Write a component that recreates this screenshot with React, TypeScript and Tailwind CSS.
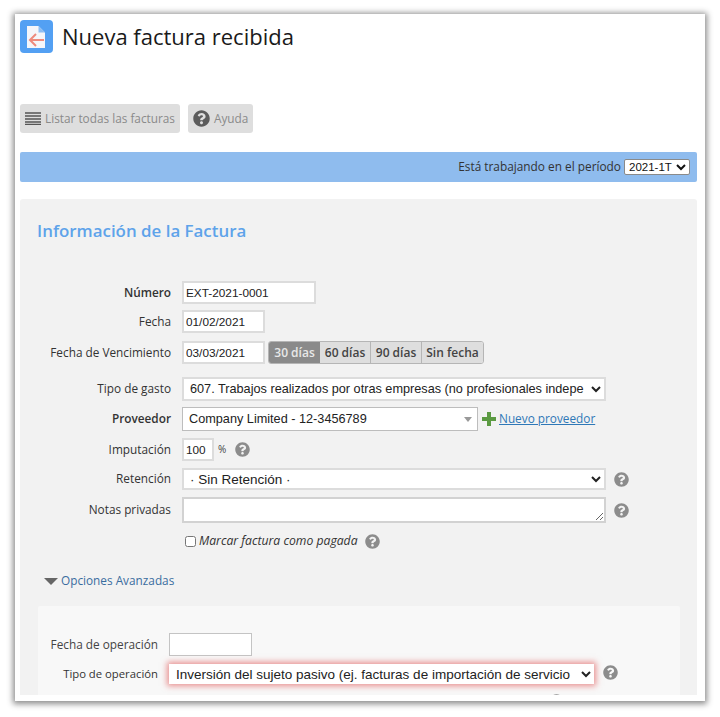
import { FaQuestionCircle } from "react-icons/fa";

const sans = "font-['Open_Sans',sans-serif]";
const arial = "font-['Liberation_Sans',Arial,sans-serif]";

function Help({ className = "" }: { className?: string }) {
  return <FaQuestionCircle className={`w-[15px] h-[15px] text-[#8c8c8c] shrink-0 ${className}`} />;
}

function Logo() {
  return (
    <svg width="33" height="33" viewBox="0 0 33 33" className="shrink-0">
      <rect width="33" height="33" rx="4" fill="#53a0f3" />
      <path d="M7 6h11.5L25 12.5V28H7z" fill="#f5f6fa" />
      <path d="M18.5 6L25 12.5h-6.5z" fill="#8dbdf2" />
      <path d="M24 20H10M16 14l-6 6 6 6" fill="none" stroke="#ee8a7c" strokeWidth="2" />
    </svg>
  );
}

function ListIcon() {
  return (
    <svg width="16" height="13" viewBox="0 0 16 13" className="shrink-0">
      <path d="M0 1h16M0 4h16M0 7h16M0 10h16M0 12.5h16" stroke="#555" strokeWidth="1.3" />
    </svg>
  );
}

function PlusIcon() {
  return (
    <svg width="14" height="14" viewBox="0 0 14 14" className="ml-[4px] shrink-0">
      <path d="M7 0v14M0 7h14" stroke="#5b9a42" strokeWidth="4" />
    </svg>
  );
}

function Row({
  label,
  bold,
  className = "",
  children,
}: {
  label: string;
  bold?: boolean;
  className?: string;
  children: React.ReactNode;
}) {
  return (
    <div className={`flex items-center ${className}`}>
      <label
        className={`w-[151px] text-right text-[11.8px] text-[#333] shrink-0 ${bold ? "font-semibold" : ""}`}
      >
        {label}
      </label>
      <div className="ml-[11px] flex items-center">{children}</div>
    </div>
  );
}

const field =
  "h-[23px] bg-white border-2 border-[#dcdcdc] px-[2px] text-[11.8px] text-[#222] outline-none " + arial;
const selectField =
  "w-[424px] bg-white border-2 border-[#dcdcdc] text-[12.7px] text-[#222] outline-none pl-[2px] " + arial;

export default function App() {
  return (
    <div className={`w-[720px] h-[717px] bg-white pt-[14px] pl-[15px] overflow-hidden ${sans}`}>
      <div className="w-[690px] h-[687px] bg-white pb-[6px] shadow-[0_1px_6px_2px_rgba(0,0,0,0.45)]">
        <div className="h-[681px] overflow-hidden pl-[5px] pr-[8px] pt-[6px]">
          <div className="flex items-center h-[33px]">
            <Logo />
            <h1 className="ml-[9px] -mt-[2px] text-[22px] leading-[32px] text-[#1a1a1a]">Nueva factura recibida</h1>
          </div>

          <div className="flex gap-[8px] mt-[51px]">
            <div className="h-[29px] w-[160px] bg-[#dedede] rounded-[3px] flex items-center pl-[5px] gap-[4px]">
              <ListIcon />
              <span className="text-[11.8px] text-[#8a8a8a]">Listar todas las facturas</span>
            </div>
            <div className="h-[29px] w-[65px] bg-[#dedede] rounded-[3px] flex items-center pl-[5px] gap-[4px]">
              <FaQuestionCircle className="w-[17px] h-[17px] text-[#5c5c5c]" />
              <span className="text-[11.8px] text-[#8a8a8a]">Ayuda</span>
            </div>
          </div>

          <div className="mt-[19px] h-[30px] bg-[#8fbcee] rounded-[2px] flex items-center justify-end pr-[7px]">
            <span className="text-[11.85px] text-[#333]">Está trabajando en el período</span>
            <select
              defaultValue="2021-1T"
              className={`ml-[3px] h-[16px] w-[66px] bg-white border border-[#8a8a8a] rounded-[2px] text-[11.5px] text-[#111] pl-0 ${arial}`}
            >
              <option>2021-1T</option>
            </select>
          </div>

          <div className="mt-[17px] h-[500px] bg-[#f2f2f2] rounded-t-[3px] overflow-hidden">
            <h2 className="pl-[17px] pt-[20px] text-[16.9px] leading-[24px] font-semibold text-[#5ea3ea]">
              Información de la Factura
            </h2>

            <div className="mt-[38px] flex flex-col">
              <Row label="Número" bold>
                <input readOnly defaultValue="EXT-2021-0001" className={`${field} w-[134px]`} />
              </Row>
              <Row label="Fecha" className="mt-[6px]">
                <input readOnly defaultValue="01/02/2021" className={`${field} w-[83px]`} />
              </Row>
              <Row label="Fecha de Vencimiento" className="mt-[8px]">
                <input readOnly defaultValue="03/03/2021" className={`${field} w-[83px]`} />
                <div className="ml-[3px] flex h-[23px] border border-[#b5b5b5] rounded-[3px] overflow-hidden text-[12px] font-semibold text-[#444]">
                  <span className="w-[51px] bg-[#8a8a8a] text-[#e8e8e8] flex items-center justify-center">30 días</span>
                  <span className="w-[51px] bg-[#dedede] border-r border-[#b5b5b5] flex items-center justify-center">60 días</span>
                  <span className="w-[51px] bg-[#dedede] border-r border-[#b5b5b5] flex items-center justify-center">90 días</span>
                  <span className="w-[61px] bg-[#dedede] flex items-center justify-center">Sin fecha</span>
                </div>
              </Row>
              <Row label="Tipo de gasto" className="mt-[13px]">
                <select defaultValue="a" className={`${selectField} h-[24px]`}>
                  <option value="a">607. Trabajos realizados por otras empresas (no profesionales indepe</option>
                </select>
              </Row>
              <Row label="Proveedor" bold className="mt-[6px]">
                <div className="h-[24px] w-[296px] bg-white border border-[#bdbdbd] flex items-center justify-between pl-[6px] pr-[5px]">
                  <span className={`pt-[1px] text-[12.7px] text-[#222] ${arial}`}>Company Limited - 12-3456789</span>
                  <span className="w-0 h-0 border-x-[4px] border-x-transparent border-t-[5px] border-t-[#999]" />
                </div>
                <PlusIcon />
                <a className="ml-[3px] text-[11.8px] text-[#2f78b7] underline">Nuevo proveedor</a>
              </Row>
              <Row label="Imputación" className="mt-[7px]">
                <input readOnly defaultValue="100" className={`${field} w-[32px]`} />
                <span className="ml-[4px] text-[10px] text-[#444]">%</span>
                <Help className="ml-[9px]" />
              </Row>
              <Row label="Retención" className="mt-[7px]">
                <select defaultValue="a" className={`${selectField} h-[22px] text-[13.5px]`}>
                  <option value="a">· Sin Retención ·</option>
                </select>
                <Help className="ml-[8px]" />
              </Row>
              <Row label="Notas privadas" className="mt-[7px]">
                <textarea readOnly className="block h-[26px] w-[424px] bg-white border-2 border-[#d2d2d2] outline-none" />
                <Help className="ml-[8px]" />
              </Row>
              <div className="mt-[10px] ml-[165px] flex items-center h-[16px]">
                <input type="checkbox" readOnly className="w-[11px] h-[11px] m-0" />
                <span className="ml-[3px] text-[12.2px] italic text-[#333]">Marcar factura como pagada</span>
                <Help className="ml-[7px]" />
              </div>
            </div>

            <div className="mt-[22px] ml-[24px] flex items-center h-[20px]">
              <span className="w-0 h-0 border-x-[7px] border-x-transparent border-t-[7px] border-t-[#666]" />
              <a className="ml-[3px] text-[11.8px] text-[#3a6d9f]">Opciones Avanzadas</a>
            </div>

            <div className="mt-[15px] mx-[18px] w-[642px] h-[120px] bg-[#f8f8f8] rounded-t-[2px] pt-[27px]">
              <div className="flex items-center">
                <label className="w-[120px] text-right text-[11.8px] text-[#444] shrink-0">Fecha de operación</label>
                <input readOnly className="ml-[11px] h-[23px] w-[83px] bg-white border border-[#c4c4c4] outline-none" />
              </div>
              <div className="flex items-center mt-[8px]">
                <label className="w-[120px] text-right text-[11.3px] text-[#333] shrink-0">Tipo de operación</label>
                <select
                  defaultValue="a"
                  className={`ml-[11px] h-[20px] w-[425px] bg-white text-[13.5px] text-[#222] outline-none pl-[3px] shadow-[0_0_6px_2px_rgba(220,60,60,0.55)] ${arial}`}
                >
                  <option value="a">Inversión del sujeto pasivo (ej. facturas de importación de servicio</option>
                </select>
                <Help className="ml-[9px] -mt-[4px]" />
              </div>
              <div className="mt-[10px] ml-[511px] w-[15px] h-[15px]">
                <Help />
              </div>
            </div>
          </div>
        </div>
      </div>
    </div>
  );
}
